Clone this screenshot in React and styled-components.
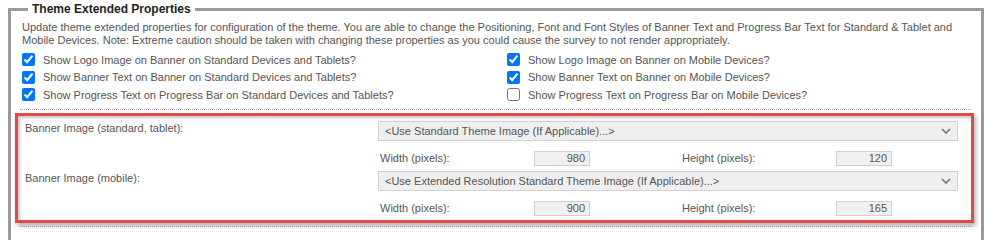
import React from "react";
import styled, { createGlobalStyle } from "styled-components";

const GlobalStyle = createGlobalStyle`
  body {
    margin: 0;
    background: #fff;
    font-family: "Liberation Sans", Arial, sans-serif;
    font-size: 11px;
    color: #555;
  }
`;

const checks = [
  { label: "Show Logo Image on Banner on Standard Devices and Tablets?", on: true },
  { label: "Show Logo Image on Banner on Mobile Devices?", on: true },
  { label: "Show Banner Text on Banner on Standard Devices and Tablets?", on: true },
  { label: "Show Banner Text on Banner on Mobile Devices?", on: true },
  { label: "Show Progress Text on Progress Bar on Standard Devices and Tablets?", on: true },
  { label: "Show Progress Text on Progress Bar on Mobile Devices?", on: false },
];

const banners = [
  {
    label: "Banner Image (standard, tablet):",
    option: "<Use Standard Theme Image (If Applicable)...>",
    width: "980",
    height: "120",
  },
  {
    label: "Banner Image (mobile):",
    option: "<Use Extended Resolution Standard Theme Image (If Applicable)...>",
    width: "900",
    height: "165",
  },
];

function Chevron() {
  return (
    <svg width="10" height="6" viewBox="0 0 10 6">
      <path d="M1 1l4 4 4-4" fill="none" stroke="#777" strokeWidth="1.6" />
    </svg>
  );
}

export default function App() {
  return (
    <Page>
      <GlobalStyle />
      <Fieldset>
        <Legend>Theme Extended Properties</Legend>
        <Description>
          Update theme extended properties for configuration of the theme. You are able to change the
          Positioning, Font and Font Styles of Banner Text and Progress Bar Text for Standard &amp; Tablet and
          Mobile Devices. Note: Extreme caution should be taken with changing these properties as you could
          cause the survey to not render appropriately.
        </Description>
        <CheckGrid>
          {checks.map((c) => (
            <CheckRow key={c.label}>
              <input type="checkbox" defaultChecked={c.on} />
              <span>{c.label}</span>
            </CheckRow>
          ))}
        </CheckGrid>
        <Dotted />
        <Highlight>
          {banners.map((b) => (
            <BannerGroup key={b.label}>
              <FieldLabel>{b.label}</FieldLabel>
              <Controls>
                <SelectBox>
                  <span>{b.option}</span>
                  <Chevron />
                </SelectBox>
                <DimRow>
                  <DimLabel>Width (pixels):</DimLabel>
                  <DimInput>{b.width}</DimInput>
                  <DimLabel $gap>Height (pixels):</DimLabel>
                  <DimInput>{b.height}</DimInput>
                </DimRow>
              </Controls>
            </BannerGroup>
          ))}
        </Highlight>
        <Dotted $after />
      </Fieldset>
    </Page>
  );
}

const Page = styled.div`
  padding: 2px 9px 0 8px;
`;

const Fieldset = styled.fieldset`
  margin: 0;
  border: 3px solid #9a9a9a;
  padding: 4px 10px 16px 9px;
  min-width: 0;
`;

const Legend = styled.legend`
  margin-left: 8px;
  padding: 0 4px;
  font-size: 12px;
  line-height: 15px;
  font-weight: bold;
  color: #222;
`;

const Description = styled.p`
  margin: 0;
  padding-left: 2px;
  line-height: 13px;
  color: #555;
`;

const CheckGrid = styled.div`
  display: grid;
  grid-template-columns: 485px 1fr;
  grid-auto-rows: 17.5px;
  margin-top: 4px;
  padding-left: 2px;
`;

const CheckRow = styled.label`
  display: flex;
  align-items: center;
  gap: 8px;
  white-space: nowrap;
  color: #555;

  input {
    margin: 0;
    width: 13px;
    height: 13px;
  }
`;

const Dotted = styled.div`
  border-top: 1px dotted #999;
  margin-top: ${(p) => (p.$after ? "3px" : "5px")};
`;

const Highlight = styled.div`
  margin: 3px -3px 0 -5px;
  border: 3px solid #e04a4a;
  padding: 5px 13px 4px 7px;
  box-shadow: 2px 3px 4px rgba(0, 0, 0, 0.3), inset 2px 2px 3px rgba(0, 0, 0, 0.22);
  display: flex;
  flex-direction: column;
  gap: 5px;
`;

const BannerGroup = styled.div`
  display: grid;
  grid-template-columns: 353px 1fr;
`;

const FieldLabel = styled.div`
  line-height: 14px;
  color: #555;
`;

const Controls = styled.div`
  display: flex;
  flex-direction: column;
  gap: 10px;
`;

const SelectBox = styled.div`
  height: 20px;
  box-sizing: border-box;
  border: 1px solid #d2d2d2;
  background: #efefef;
  display: flex;
  align-items: center;
  justify-content: space-between;
  padding: 0 6px 0 6px;
  color: #555;
  white-space: nowrap;
`;

const DimRow = styled.div`
  display: flex;
  align-items: center;
  padding-left: 2px;
  height: 15px;
`;

const DimLabel = styled.span`
  width: 154px;
  margin-left: ${(p) => (p.$gap ? "92px" : "0")};
  color: #555;
`;

const DimInput = styled.div`
  width: 56px;
  height: 15px;
  box-sizing: border-box;
  border: 1px solid #d0d0d0;
  background: #f0f0f0;
  text-align: right;
  padding-right: 4px;
  line-height: 13px;
  color: #555;
`;
